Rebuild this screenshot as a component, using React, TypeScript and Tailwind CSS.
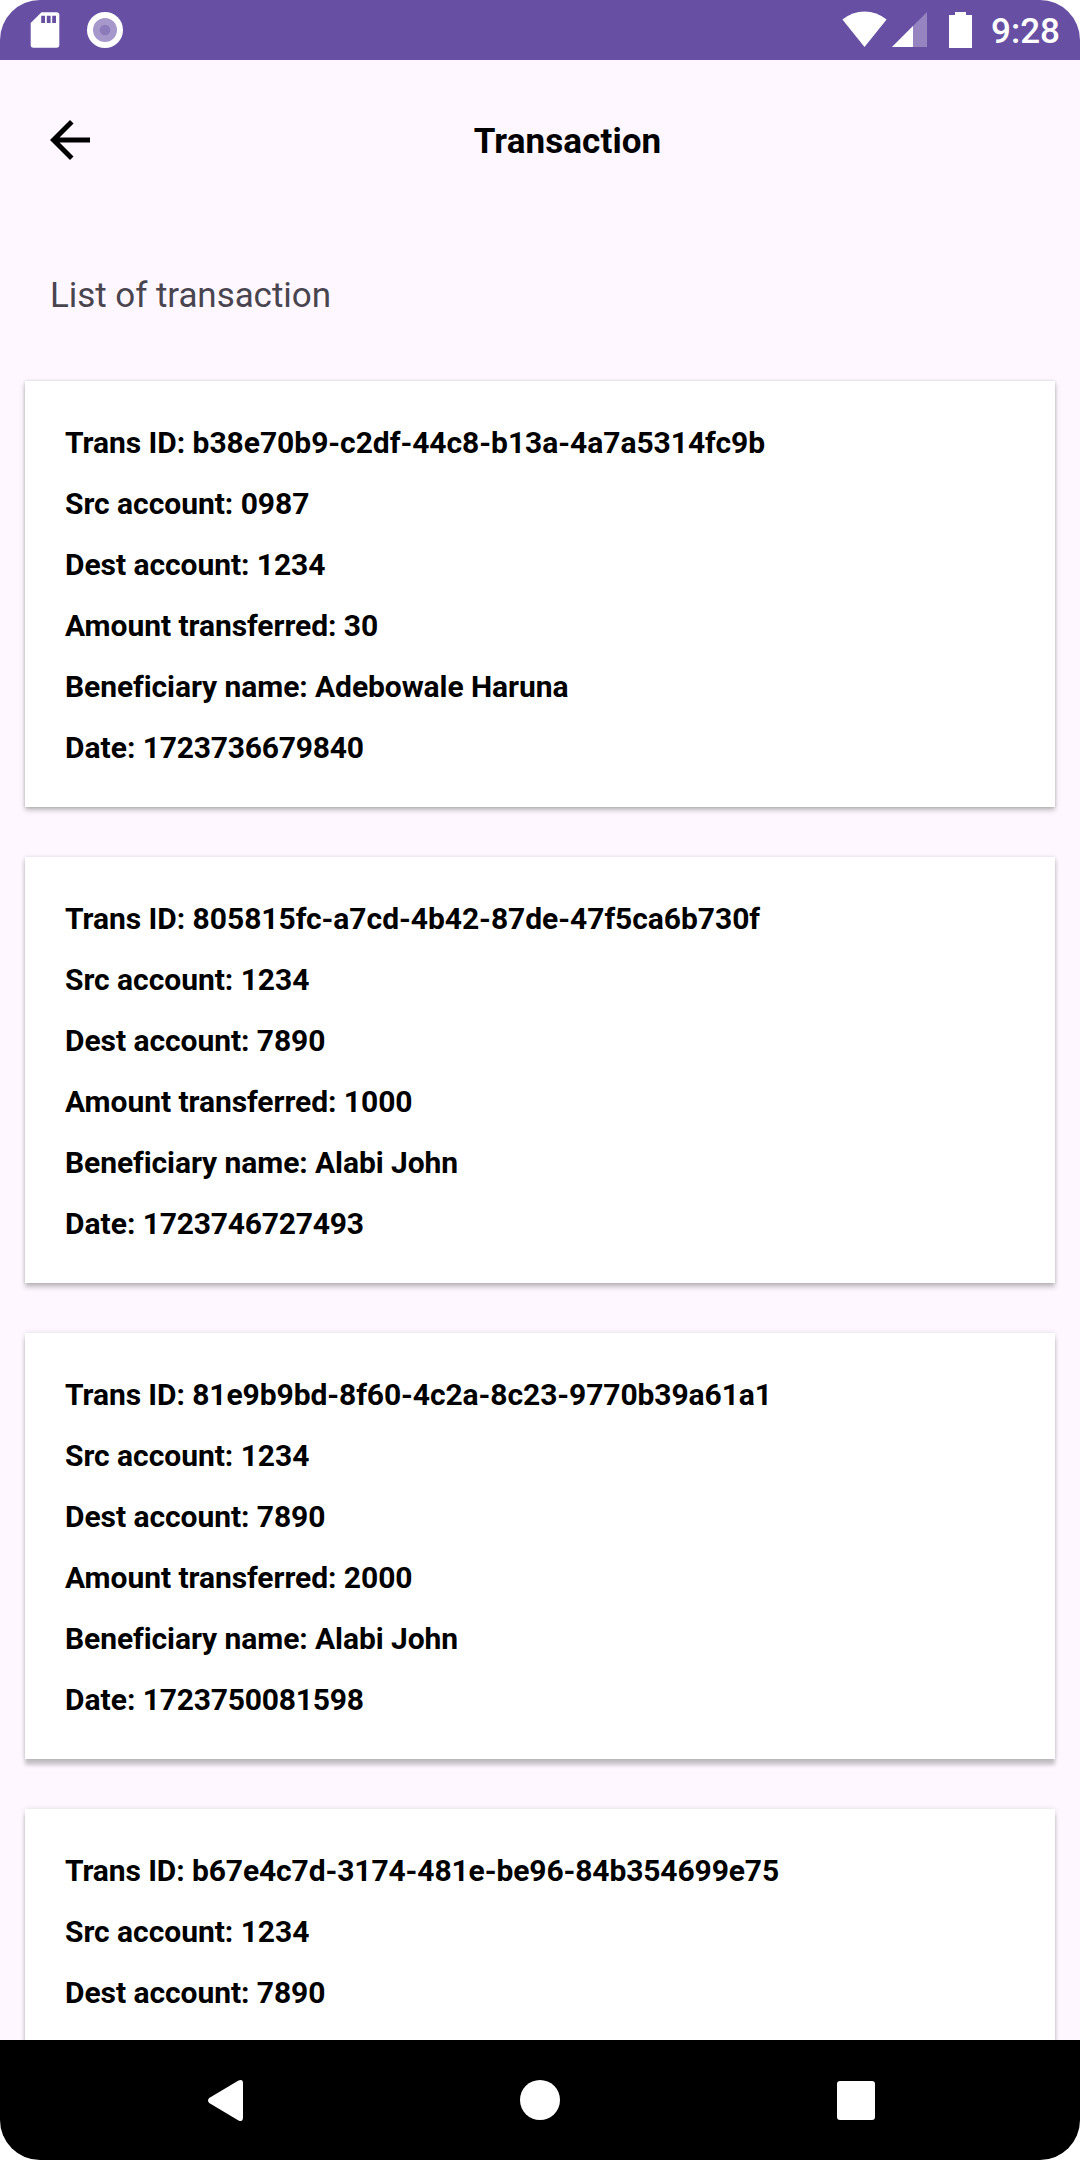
type Transaction = {
  id: string;
  src: string;
  dest: string;
  amount?: string;
  name?: string;
  date?: string;
  idTracking: string;
  shadow: string;
};

const transactions: Transaction[] = [
  { id: 'b38e70b9-c2df-44c8-b13a-4a7a5314fc9b', src: '0987', dest: '1234', amount: '30', name: 'Adebowale Haruna', date: '1723736679840', idTracking: 'tracking-[-0.04px]', shadow: 'shadow-[0_3px_5px_rgba(0,0,0,0.26),0_0_3px_rgba(0,0,0,0.14)]' },
  { id: '805815fc-a7cd-4b42-87de-47f5ca6b730f', src: '1234', dest: '7890', amount: '1000', name: 'Alabi John', date: '1723746727493', idTracking: 'tracking-[-0.04px]', shadow: 'shadow-[0_4px_5px_rgba(0,0,0,0.24),0_0_4px_rgba(0,0,0,0.12)]' },
  { id: '81e9b9bd-8f60-4c2a-8c23-9770b39a61a1', src: '1234', dest: '7890', amount: '2000', name: 'Alabi John', date: '1723750081598', idTracking: 'tracking-[-0.08px]', shadow: 'shadow-[0_6px_4px_rgba(0,0,0,0.21),0_0_5px_rgba(0,0,0,0.12)]' },
  { id: 'b67e4c7d-3174-481e-be96-84b354699e75', src: '1234', dest: '7890', idTracking: 'tracking-[-0.11px]', shadow: 'shadow-[0_6px_4px_rgba(0,0,0,0.21),0_0_5px_rgba(0,0,0,0.12)]' },
];

function StatusBar() {
  return (
    <header className="flex h-[60px] shrink-0 items-start bg-[#6750a4] text-white">
      <svg className="ml-[30px] mt-3 h-9 w-[30px]" viewBox="0 0 30 36" fill="none">
        <path d="M11.5 .2H26.5Q29.3.2 29.3 3V33Q29.3 35.8 26.5 35.8H3.5Q.7 35.8.7 33V11Z" fill="white" />
        <path d="M11.2 3.7h3.8v7.4h-3.8zM16.8 3.7h3.8v7.4h-3.8zM22.2 3.7H26v7.4h-3.8z" fill="#6750a4" />
      </svg>
      <svg className="ml-[27px] mt-3 size-9" viewBox="0 0 36 36">
        <circle cx="18" cy="18" r="18" fill="white" />
        <circle cx="18" cy="18" r="12" fill="#a698cb" />
        <circle cx="18" cy="18" r="5.3" fill="#8c7aba" />
      </svg>
      <svg className="ml-auto mt-[11px] h-9 w-[45px] shrink-0" viewBox="0 0 45 36" fill="white">
        <path d="M.4 8.5Q10.5.5 22.5.5T44.6 8.5L22.5 36Z" />
      </svg>
      <svg className="ml-[5px] mt-3 h-[35px] w-[35px] shrink-0" viewBox="0 0 35 35" fill="white">
        <path d="M0 35L35 0V35Z" opacity=".3" />
        <path d="M0 35L21 14V35Z" />
      </svg>
      <svg className="ml-[22px] mt-3 h-9 w-[23px] shrink-0" viewBox="0 0 23 36" fill="white">
        <path d="M0 3H6V0H17V3H23V36H0Z" />
      </svg>
      <span className="ml-[19px] mr-5 mt-[11px] text-[35px] font-medium leading-[41px]">9:28</span>
    </header>
  );
}

function TransactionCard({ item }: { item: Transaction }) {
  return (
    <article className={`flex h-[426px] shrink-0 flex-col gap-[25px] bg-white px-10 pt-11 text-[30px] font-bold leading-9 text-black ${item.shadow}`}>
      <p className={item.idTracking}>Trans ID: {item.id}</p>
      <p className="tracking-[-0.04px]">Src account: {item.src}</p>
      <p className="tracking-[-0.06px]">Dest account: {item.dest}</p>
      {item.amount && <p className="tracking-[-0.06px]">Amount transferred: {item.amount}</p>}
      {item.name && <p className="tracking-[-0.08px]">Beneficiary name: {item.name}</p>}
      {item.date && (
        <p>
          Date: <span className="tracking-[-0.22px]">{item.date}</span>
        </p>
      )}
    </article>
  );
}

export default function App() {
  return (
    <div className="h-[2160px] w-[1080px] bg-white font-['Roboto',sans-serif]">
      <div className="flex h-full flex-col overflow-hidden rounded-[40px] bg-[#fef7ff]">
        <StatusBar />
        <div className="flex h-40 shrink-0 items-center pl-10">
          <button className="size-[60px]" aria-label="Back">
            <svg className="size-[60px]" viewBox="0 0 24 24" fill="black">
              <path d="M20 11H7.83l5.59-5.59L12 4l-8 8 8 8 1.41-1.41L7.83 13H20z" />
            </svg>
          </button>
          <h1 className="flex-1 pr-[45px] pt-0.5 text-center text-[35px] font-bold leading-[41px] tracking-[0.1px] text-black">Transaction</h1>
        </div>
        <h2 className="ml-[50px] mt-[55px] shrink-0 text-[35px] leading-[41px] tracking-[-0.06px] text-[#49454f]">List of transaction</h2>
        <main className="mt-[45px] flex min-h-0 flex-1 flex-col gap-[50px] overflow-hidden px-[25px] pt-5">
          {transactions.map((item) => (
            <TransactionCard key={item.id} item={item} />
          ))}
        </main>
        <nav className="flex h-[120px] shrink-0 items-center bg-black">
          <svg className="ml-[208px] mt-px h-[41px] w-[35px]" viewBox="0 0 35 41" fill="white">
            <path d="M1.2 18L30.5.6Q35-1.2 35 3.5V37.5Q35 42.2 30.5 40.4L1.2 23Q-1.2 20.5 1.2 18Z" />
          </svg>
          <span className="ml-[276.5px] size-10 rounded-full bg-white" />
          <span className="ml-[277px] mt-px h-[39px] w-[38px] rounded-[3px] bg-white" />
        </nav>
      </div>
    </div>
  );
}
